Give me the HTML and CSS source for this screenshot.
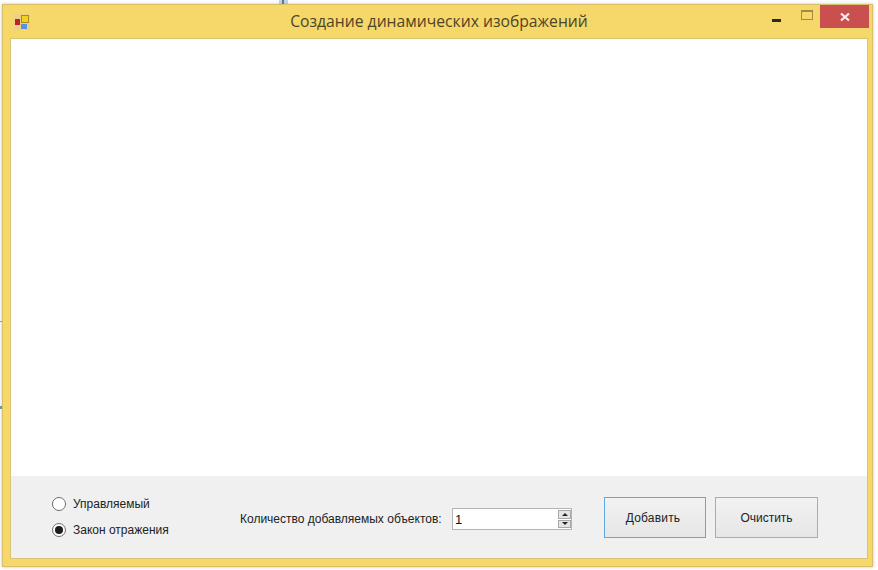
FILE: index.html
```html
<!DOCTYPE html>
<html lang="ru">
<head>
<meta charset="utf-8">
<title>Создание динамических изображений</title>
<link rel="stylesheet" href="styles.css">
</head>
<body>
<span class="desk-mark top"></span>
<span class="desk-mark left-a"></span>
<span class="desk-mark left-b"></span>
<div class="window">
  <header class="titlebar">
    <div class="title-left">
      <svg class="app-icon" width="16" height="16" viewBox="0 0 16 16">
        <rect x="0" y="0" width="16" height="16" fill="#ecd08a"/>
        <rect x="1" y="5" width="5" height="6" fill="#b8262a"/>
        <rect x="7.5" y="1.5" width="7" height="7" fill="#f0d020" stroke="#a88a20"/>
        <rect x="7" y="10" width="6" height="5" fill="#5a90e0"/>
      </svg>
    </div>
    <div class="title">Создание динамических изображений</div>
    <div class="controls">
      <div class="ctl min"><span class="min-bar"></span></div>
      <div class="ctl max"><span class="max-box"></span></div>
      <div class="ctl close">
        <svg width="10" height="10" viewBox="0 0 10 10"><path d="M1 1.5 L9 8.5 M9 1.5 L1 8.5" stroke="#f6eeee" stroke-width="2.2"/></svg>
      </div>
    </div>
  </header>
  <main class="client">
    <div class="canvas"></div>
    <footer class="panel">
      <div class="radios">
        <label class="radio"><span class="dot"></span>Управляемый</label>
        <label class="radio"><span class="dot checked"></span>Закон отражения</label>
      </div>
      <div class="count-label">Количество добавляемых объектов:</div>
      <div class="spin">
        <span class="spin-value">1</span>
        <div class="spin-btns">
          <span class="spin-btn"><i class="arrow up"></i></span>
          <span class="spin-btn"><i class="arrow down"></i></span>
        </div>
      </div>
      <div class="buttons">
        <button class="btn focused">Добавить</button>
        <button class="btn">Очистить</button>
      </div>
    </footer>
  </main>
</div>
</body>
</html>
```

FILE: styles.css
```css
* { box-sizing: border-box; }
html, body { margin: 0; height: 100%; background: #ffffff; overflow: hidden; }
body { padding: 4px 5px 3px 2px; position: relative; }
.desk-mark { position: absolute; display: block; }
.desk-mark.top { left: 279px; top: 0; width: 9px; height: 4px; background: linear-gradient(90deg, #c8d4dc 0 30%, #4d7fa8 30% 60%, #c8d4dc 60%); }
.desk-mark.left-a { left: 0; top: 321px; width: 2px; height: 1px; background: #9a9a9a; }
.desk-mark.left-b { left: 0; top: 406px; width: 2px; height: 3px; background: #6d9aa5; }
.window {
  position: relative;
  height: 100%;
  display: flex;
  flex-direction: column;
  background: #f6d769;
  border: 1px solid #d9bf6a;
  padding: 0 4px 7px 7px;
  box-shadow: 0 0 3px rgba(120,120,120,.45);
}
.titlebar {
  height: 33px;
  flex: none;
  display: grid;
  grid-template-columns: 1fr auto 1fr;
  align-items: center;
  font-family: "Open Sans", sans-serif;
  color: #4e4526;
}
.title-left { display: flex; }
.app-icon { margin-left: 4px; margin-top: 0; flex: none; }
.title {
  text-align: center;
  font-size: 15.7px;
  margin-top: -1px;
  white-space: nowrap;
}
.controls { display: flex; align-self: start; justify-content: flex-end; margin-right: -1px; }
.ctl { height: 23px; display: flex; align-items: center; justify-content: center; }
.min { width: 33px; }
.max { width: 27px; }
.close { width: 49px; background: #c9504f; }
.min-bar { width: 9px; height: 3px; background: #2c2a20; margin-top: 7px; }
.max-box { width: 12px; height: 10px; border: 1px solid #a08c40; border-top-width: 2px; margin-top: -3px; }
.client {
  flex: 1;
  display: flex;
  flex-direction: column;
  border: 1px solid #d9c377;
  min-height: 0;
}
.canvas { flex: 1; background: #ffffff; }
.panel {
  height: 82px;
  flex: none;
  background: #f0f0f0;
  display: flex;
  align-items: center;
  font-family: "Liberation Sans", sans-serif;
  font-size: 12px;
  color: #222222;
}
.radios {
  display: flex;
  flex-direction: column;
  gap: 12px;
  margin-left: 41px;
  width: 188px;
  margin-top: 0;
}
.radio { display: flex; align-items: center; gap: 7px; height: 14px; }
.dot {
  width: 14px; height: 14px; border-radius: 50%;
  background: #ffffff; border: 1px solid #6e6e6e;
  display: flex; align-items: center; justify-content: center;
}
.dot.checked::after {
  content: ""; width: 8px; height: 8px; border-radius: 50%; background: #1d1d1d;
}
.count-label { width: 212px; margin-top: 3px; white-space: nowrap; }
.spin {
  width: 120px; height: 22px;
  background: #ffffff;
  border: 1px solid #b4b4b4;
  display: flex;
  justify-content: space-between;
  margin-top: 4px;
}
.spin-value { padding: 3px 0 0 2px; font-size: 13px; color: #111; }
.spin-btns { width: 13px; display: flex; flex-direction: column; gap: 1px; margin: 1px 0; background: #ffffff; }
.spin-btn { flex: 1; background: #e4e4e4; border: 1px solid #a8a8a8; display: flex; align-items: center; justify-content: center; }
.arrow { width: 0; height: 0; border-left: 3px solid transparent; border-right: 3px solid transparent; }
.arrow.up { border-bottom: 3px solid #222; }
.arrow.down { border-top: 3px solid #222; }
.buttons { display: flex; gap: 9px; margin-left: 32px; margin-top: 1px; }
.btn {
  width: 102px; height: 41px;
  background: linear-gradient(#f2f2f2, #e6e6e6);
  border: 1px solid #acacac;
  font: inherit;
  color: #222222;
  padding: 0;
}
.btn.focused { border-color: #5fa8e0; letter-spacing: 0.2px; padding-right: 4px; }
.btn:last-child { width: 103px; }
```
